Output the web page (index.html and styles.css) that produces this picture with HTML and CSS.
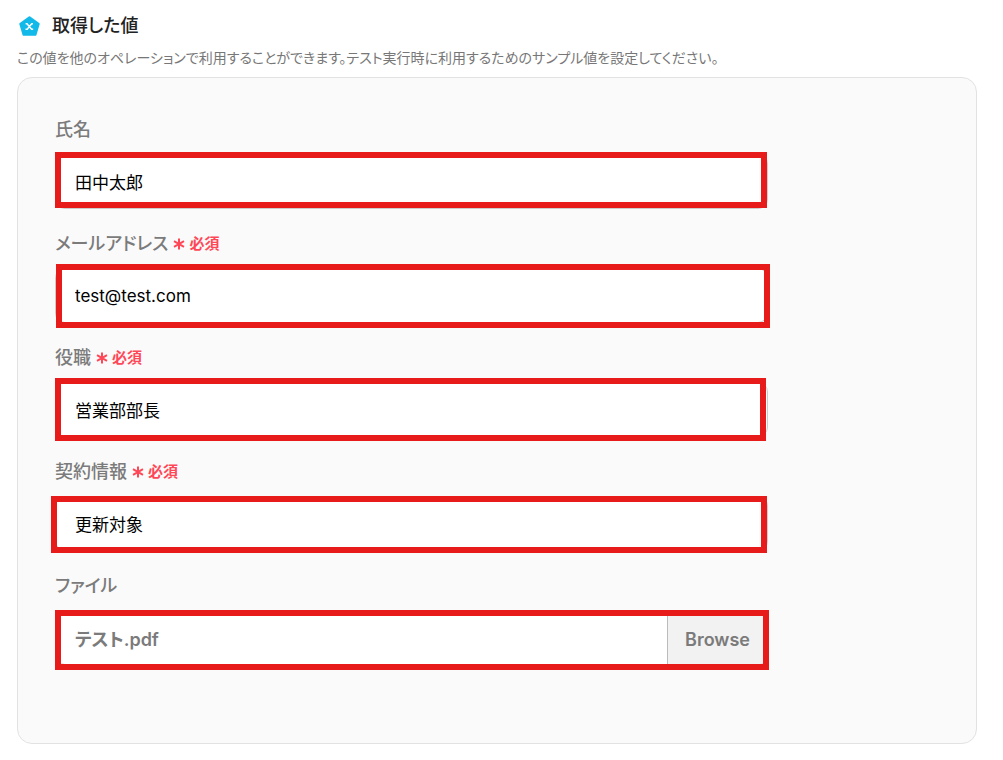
FILE: index.html
```
<!DOCTYPE html>
<html lang="ja">
<head>
    <meta charset="UTF-8">
    <meta name="viewport" content="width=device-width, initial-scale=1.0">
    <title>取得した値</title>
    <link rel="stylesheet" href="styles.css">
</head>
<body>

<header class="heading">
    <svg class="heading-icon" viewBox="0 0 23 23" aria-hidden="true">
        <path d="M11.5 2.4 L20.5 8.9 L17.3 19.6 H5.7 L2.5 8.9 Z" fill="#12b9e9" stroke="#12b9e9" stroke-width="2.4" stroke-linejoin="round"/>
        <path d="M7.6 8.8 H9 L13.6 14.2 H15.2 M15 8.8 H13.7 L9.2 14.2 H7.5" fill="none" stroke="#fff" stroke-width="1.5"/>
    </svg>
    <h1>取得した値</h1>
</header>
<p class="description">この値を他のオペレーションで利用することができます。テスト実行時に利用するためのサンプル値を設定してください。</p>

<form class="panel">
    <div class="field">
        <label for="name">氏名</label>
        <div class="control">
            <input type="text" id="name" value="田中太郎">
            <span class="mark mark-name"></span>
        </div>
    </div>

    <div class="field">
        <label for="email">メールアドレス <span class="required"><svg viewBox="0 0 12 12" aria-hidden="true"><path d="M6 0.5V11.5M1 3.2L11 8.8M11 3.2L1 8.8"/></svg>必須</span></label>
        <div class="control">
            <input type="text" id="email" value="test@test.com">
            <span class="mark mark-email"></span>
        </div>
    </div>

    <div class="field">
        <label for="position">役職 <span class="required"><svg viewBox="0 0 12 12" aria-hidden="true"><path d="M6 0.5V11.5M1 3.2L11 8.8M11 3.2L1 8.8"/></svg>必須</span></label>
        <div class="control">
            <input type="text" id="position" value="営業部部長">
            <span class="mark mark-position"></span>
        </div>
    </div>

    <div class="field">
        <label for="contract">契約情報 <span class="required"><svg viewBox="0 0 12 12" aria-hidden="true"><path d="M6 0.5V11.5M1 3.2L11 8.8M11 3.2L1 8.8"/></svg>必須</span></label>
        <div class="control">
            <input type="text" id="contract" value="更新対象">
            <span class="mark mark-contract"></span>
        </div>
    </div>

    <div class="field">
        <label for="file">ファイル</label>
        <div class="control file">
            <input type="text" id="file" value="テスト.pdf" readonly>
            <button type="button">Browse</button>
            <span class="mark mark-file"></span>
        </div>
    </div>
</form>

</body>
</html>
```
FILE: styles.css
```
* { box-sizing: border-box; }
body { margin: 0; padding: 13px 26px 16px 17px; background: #fff; font-family: Inter, "Noto Sans CJK JP", sans-serif; font-feature-settings: "palt"; }

.heading { display: flex; align-items: center; gap: 11px; height: 26px; padding-left: 1px; }
.heading-icon { width: 23px; height: 23px; }
h1 { margin: 0; font-size: 18px; font-weight: 500; line-height: 26px; color: #222; }
.description { margin: 8px 0 9px; font-size: 14px; line-height: 21px; color: #777; }

.panel { display: flex; flex-direction: column; gap: 23px; padding: 40px 37px 78px; background: #fafafa; border: 1px solid #e2e2e2; border-radius: 15px; }
.field { display: flex; flex-direction: column; gap: 12px; max-width: 713px; }
label { display: flex; align-items: center; gap: 5px; font-size: 18px; font-weight: 500; line-height: 24px; color: #7b7b7b; }
.required { display: flex; align-items: center; gap: 4px; font-size: 15px; font-weight: 600; color: #ff4757; }
.required svg { width: 12px; height: 12px; fill: none; stroke: #ff4757; stroke-width: 2; }

.control { position: relative; display: flex; height: 55px; background: #fff; border: 1px solid #ccc; border-radius: 10px; }
input { flex: 1; min-width: 0; padding: 0 19px; border: 0; background: none; font: inherit; font-size: 17px; color: #000; outline: none; }
.file input { font-size: 18px; font-weight: 600; color: #7b7b7b; }
button { width: 100px; padding: 4px 0 0; border: 0; border-left: 1px solid #bbb; border-radius: 0 9px 9px 0; background: #f2f2f2; font: inherit; font-size: 18px; font-weight: 600; color: #7b7b7b; cursor: pointer; }

/* highlight frames drawn over each control */
.mark { position: absolute; border: 6px solid #e81b1b; pointer-events: none; }
.mark-name { inset: -3px 0 0 -1px; }
.mark-email { inset: -5px -3px -6px 0; }
.mark-position { inset: -5px 1px -5px -1px; }
.mark-contract { inset: -1px 0 -3px -5px; }
.mark-file { inset: -1px -2px -6px -1px; }
```
